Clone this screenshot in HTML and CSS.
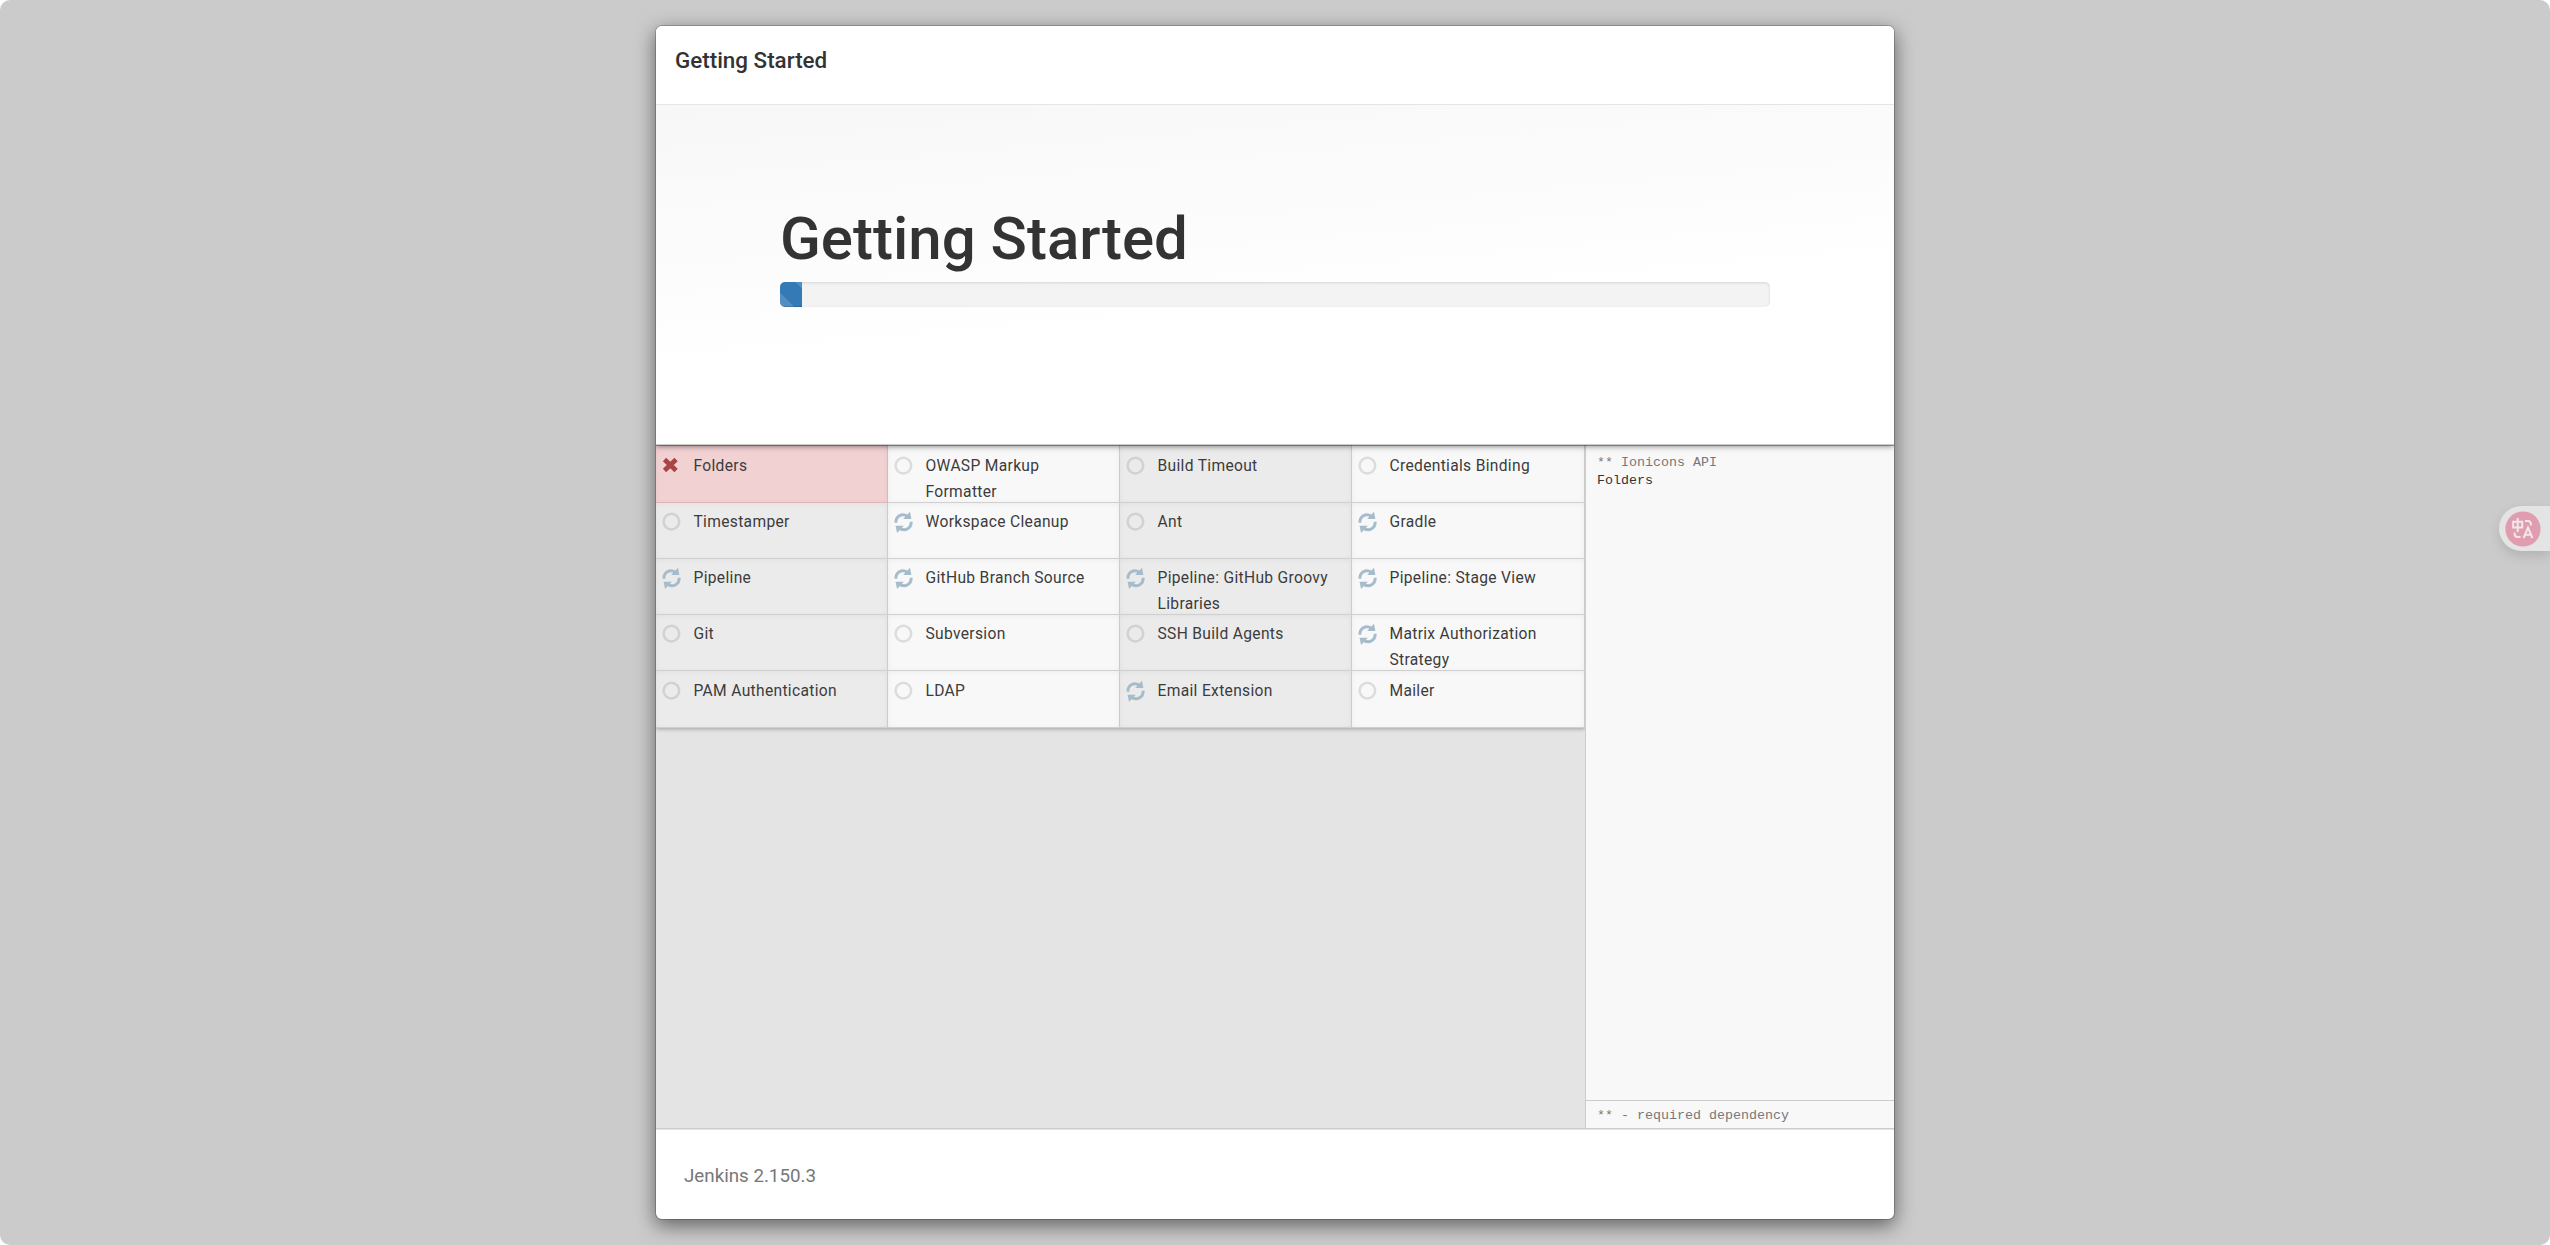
FILE: index.html
```html
<!DOCTYPE html>
<html lang="en">
<head>
    <meta charset="UTF-8">
    <meta name="viewport" content="width=device-width, initial-scale=1.0">
    <title>Getting Started</title>
    <link rel="stylesheet" href="styles.css">
</head>
<body>
<svg class="icon-defs">
    <symbol id="icon-pending" viewBox="0 0 24 24">
        <circle cx="11.4" cy="10.6" r="7.8" fill="none" stroke="currentColor" stroke-width="2.5"/>
    </symbol>
    <symbol id="icon-fail" viewBox="0 0 24 24">
        <path d="M4.5 4.6L16.1 15.6M16.1 4.6L4.5 15.6" fill="none" stroke="currentColor" stroke-width="4.8"/>
    </symbol>
    <symbol id="icon-refresh" viewBox="0 0 24 24">
        <path d="M3.9 11.8C3.6 5.4 9.6 1.8 15.4 5.2" fill="none" stroke="currentColor" stroke-width="3"/>
        <path d="M18 .8L19.4 8L11.2 8Z" fill="currentColor"/>
        <path d="M19.2 10.8C19.4 17.2 13.4 20.8 7.6 17.4" fill="none" stroke="currentColor" stroke-width="3"/>
        <path d="M5 22L3.6 14.8L11.8 14.8Z" fill="currentColor"/>
    </symbol>
</svg>

<div class="page">
    <div class="modal">
        <div class="modal-header">
            <h4>Getting Started</h4>
        </div>
        <div class="modal-body">
            <div class="jumbotron">
                <h1>Getting Started</h1>
                <div class="progress">
                    <div class="progress-bar"></div>
                </div>
            </div>
            <div class="install">
                <div class="plugins">
                    <div class="plugin fail"><svg><use href="#icon-fail"/></svg><span>Folders</span></div>
                    <div class="plugin"><svg><use href="#icon-pending"/></svg><span>OWASP Markup Formatter</span></div>
                    <div class="plugin"><svg><use href="#icon-pending"/></svg><span>Build Timeout</span></div>
                    <div class="plugin"><svg><use href="#icon-pending"/></svg><span>Credentials Binding</span></div>
                    <div class="plugin"><svg><use href="#icon-pending"/></svg><span>Timestamper</span></div>
                    <div class="plugin installing"><svg><use href="#icon-refresh"/></svg><span>Workspace Cleanup</span></div>
                    <div class="plugin"><svg><use href="#icon-pending"/></svg><span>Ant</span></div>
                    <div class="plugin installing"><svg><use href="#icon-refresh"/></svg><span>Gradle</span></div>
                    <div class="plugin installing"><svg><use href="#icon-refresh"/></svg><span>Pipeline</span></div>
                    <div class="plugin installing"><svg><use href="#icon-refresh"/></svg><span>GitHub Branch Source</span></div>
                    <div class="plugin installing"><svg><use href="#icon-refresh"/></svg><span>Pipeline: GitHub Groovy Libraries</span></div>
                    <div class="plugin installing"><svg><use href="#icon-refresh"/></svg><span>Pipeline: Stage View</span></div>
                    <div class="plugin"><svg><use href="#icon-pending"/></svg><span>Git</span></div>
                    <div class="plugin"><svg><use href="#icon-pending"/></svg><span>Subversion</span></div>
                    <div class="plugin"><svg><use href="#icon-pending"/></svg><span>SSH Build Agents</span></div>
                    <div class="plugin installing"><svg><use href="#icon-refresh"/></svg><span>Matrix Authorization Strategy</span></div>
                    <div class="plugin"><svg><use href="#icon-pending"/></svg><span>PAM Authentication</span></div>
                    <div class="plugin"><svg><use href="#icon-pending"/></svg><span>LDAP</span></div>
                    <div class="plugin installing"><svg><use href="#icon-refresh"/></svg><span>Email Extension</span></div>
                    <div class="plugin"><svg><use href="#icon-pending"/></svg><span>Mailer</span></div>
                </div>
                <div class="console">
                    <div class="console-log">
                        <div class="dependency">** Ionicons API</div>
                        <div>Folders</div>
                    </div>
                    <div class="console-note">** - required dependency</div>
                </div>
            </div>
        </div>
        <div class="modal-footer">Jenkins 2.150.3</div>
    </div>

    <div class="translate">
        <svg viewBox="0 0 36 36">
            <circle cx="18" cy="18" r="17.6" fill="#e09db0"/>
            <g fill="none" stroke="#f0e8ea" stroke-width="2">
                <path d="M8.2 10.8H17.2V16.6H8.2ZM12.7 7V21"/>
                <path d="M20 10H23Q26 10 26 14.5"/>
                <path d="M9.5 21.5Q9.5 26 12.5 26H15.5"/>
                <path d="M18.6 27L23 16.6L27.4 27M20 23.8H26"/>
            </g>
        </svg>
    </div>
</div>
</body>
</html>
```

FILE: styles.css
```css
* {
    box-sizing: border-box;
}
body {
    margin: 0;
    background-color: #fff;
    font-family: Roboto, Arial, sans-serif;
    color: #333;
}
.icon-defs {
    display: none;
}
.page {
    position: relative;
    height: 1245px;
    padding-top: 25px;
    background-color: #cbcbcb;
    border-radius: 10px;
    overflow: hidden;
}
.modal {
    display: flex;
    flex-direction: column;
    width: 1240px;
    height: 1195px;
    margin: 0 auto;
    background-color: #fff;
    background-clip: padding-box;
    border: 1px solid rgba(0, 0, 0, 0.2);
    border-radius: 7px;
    box-shadow: 0 6px 19px rgba(0, 0, 0, 0.5);
    overflow: hidden;
}
.modal-header {
    position: relative;
    z-index: 1;
    height: 79px;
    padding: 19px;
    background-color: #fff;
    border-bottom: 1px solid #e5e5e5;
}
.modal-header h4 {
    margin: 0;
    font-size: 22.4px;
    font-weight: 500;
    line-height: 31px;
}
.modal-body {
    flex: 1;
    display: flex;
    flex-direction: column;
    min-height: 0;
}
.jumbotron {
    position: relative;
    height: 340px;
    padding: 100px 124px 0;
    background: linear-gradient(175deg, #f7f7f7, #fff 60%);
    border-bottom: 1px solid #ccc;
    box-shadow: 0 1px 6px rgba(0, 0, 0, 0.5), 0 1px 0 rgba(0, 0, 0, 0.3);
}
.jumbotron h1 {
    margin: 0;
    font-size: 60px;
    font-weight: 500;
    line-height: 67px;
}
.progress {
    height: 25px;
    margin-top: 10px;
    background-color: #f3f3f3;
    border-radius: 5px;
    box-shadow: inset 0 1px 3px rgba(0, 0, 0, 0.12);
    overflow: hidden;
}
.progress-bar {
    width: 22px;
    height: 100%;
    background-color: #337ab7;
    background-image: linear-gradient(45deg, rgba(255, 255, 255, 0.15) 10.6px, transparent 10.6px, transparent 28.3px, rgba(255, 255, 255, 0.15) 28.3px);
    box-shadow: inset 0 -1px 0 rgba(0, 0, 0, 0.15);
}
.install {
    flex: 1;
    display: flex;
    min-height: 0;
    background-color: #e4e4e4;
    border-bottom: 1px solid #ccc;
}
.plugins {
    display: grid;
    grid-template-columns: 232px 232px 232px 233px;
    grid-template-rows: 58px 56px 56px 56px 57px;
    align-self: flex-start;
    box-shadow: 0 1px 4px rgba(0, 0, 0, 0.3);
}
.plugin {
    display: flex;
    gap: 9.5px;
    padding: 6px 5px 0 4px;
    background-color: #f8f8f8;
    border-right: 1px solid #ccc;
    border-bottom: 1px solid #d0d0d0;
    box-shadow: inset 0 1px 5px rgba(0, 0, 0, 0.05);
    color: #3c3c3c;
    font-size: 15.6px;
    line-height: 26px;
    letter-spacing: 0.32px;
    overflow: hidden;
}
.plugin:nth-child(-n+4) {
    padding-top: 8px;
}
.plugin:nth-last-child(-n+4) {
    padding-top: 7px;
}
.plugin:nth-child(odd) {
    background-color: #ebebeb;
}
.plugin.fail {
    background-color: #f2d1d3;
    border-color: #e0b4b4;
}
.plugin svg {
    flex: none;
    width: 24px;
    height: 24px;
    margin-top: 2px;
    color: rgba(0, 0, 0, 0.11);
}
.plugin.fail svg {
    color: #a94442;
}
.plugin.installing svg {
    color: #a6bccb;
}
.console {
    flex: 1;
    display: flex;
    flex-direction: column;
    background-color: #f8f8f8;
    border-left: 1px solid #ccc;
    font-family: "Liberation Mono", "Courier New", monospace;
    font-size: 13.33px;
    line-height: 18px;
}
.console-log {
    flex: 1;
    padding: 9px 11px;
}
.dependency,
.console-note {
    color: #777;
}
.console-note {
    height: 28px;
    padding: 6px 11px 0;
    border-top: 1px solid #ccc;
}
.modal-footer {
    height: 90px;
    padding: 33px 28px;
    border-top: 1px solid #e5e5e5;
    color: #777;
    font-size: 18.75px;
    line-height: 26px;
}
.translate {
    position: absolute;
    top: 506px;
    right: 0;
    width: 51px;
    height: 45px;
    padding: 5px 6px;
    background-color: #e4e4e4;
    border-radius: 23px 0 0 23px;
    box-shadow: 0 5px 12px rgba(0, 0, 0, 0.12);
}
.translate svg {
    display: block;
    width: 36px;
    height: 36px;
}
```
